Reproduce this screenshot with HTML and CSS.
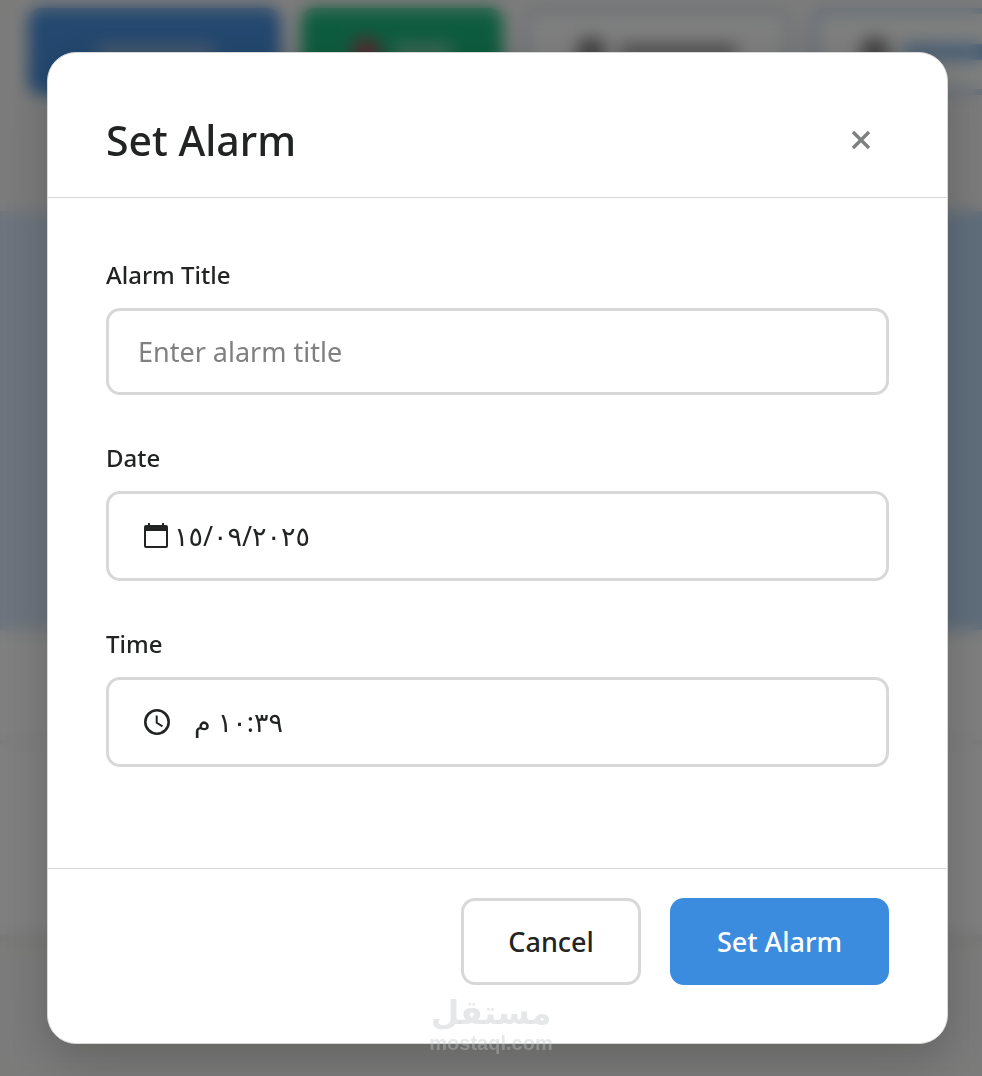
FILE: index.html
```html
<!DOCTYPE html>
<html lang="en">
<head>
    <meta charset="UTF-8">
    <meta name="viewport" content="width=device-width, initial-scale=1.0">
    <title>Set Alarm</title>
    <link rel="stylesheet" href="styles.css">
</head>
<body>
    <!-- page behind the dialog -->
    <div class="page" inert>
        <div class="toolbar">
            <button class="tool tool-blue"><i class="line"></i></button>
            <button class="tool tool-green"><i class="dot"></i><i class="line"></i></button>
            <button class="tool tool-plain"><i class="dot"></i><i class="line"></i></button>
            <button class="tool tool-outline"><i class="dot"></i><i class="line"></i></button>
        </div>
        <div class="content">
            <div class="panel"></div>
            <div class="row"></div>
            <div class="row row-tall"></div>
        </div>
    </div>

    <div class="overlay">
        <form class="modal" role="dialog" aria-labelledby="modal-title">
            <header class="modal-header">
                <h2 id="modal-title">Set Alarm</h2>
                <button type="button" class="close" aria-label="Close">
                    <svg viewBox="0 0 20 20" width="20" height="20"><path d="M2 2 L18 18 M18 2 L2 18"/></svg>
                </button>
            </header>
            <div class="modal-body">
                <div class="group">
                    <label for="title">Alarm Title</label>
                    <div class="field">
                        <input type="text" id="title" placeholder="Enter alarm title">
                    </div>
                </div>
                <div class="group">
                    <label for="date">Date</label>
                    <div class="field field-picker">
                        <svg class="icon" viewBox="0 0 24 26" width="24" height="26">
                            <path d="M4 0h2v2h12V0h2v2h2a2 2 0 0 1 2 2v19a2 2 0 0 1-2 2H2a2 2 0 0 1-2-2V4a2 2 0 0 1 2-2h2z M2 8v15h20V8z" fill-rule="evenodd"/>
                        </svg>
                        <input type="text" id="date" value="١٥/٠٩/٢٠٢٥">
                    </div>
                </div>
                <div class="group">
                    <label for="time">Time</label>
                    <div class="field field-picker field-time">
                        <svg class="icon icon-clock" viewBox="0 0 26 26" width="26" height="26">
                            <circle cx="13" cy="13" r="11.7"/>
                            <path d="M12.7 6.5v7.3l5.8 3.6" stroke-width="2"/>
                        </svg>
                        <input type="text" id="time" dir="rtl" value="١٠:٣٩ م">
                    </div>
                </div>
            </div>
            <footer class="modal-footer">
                <button type="button" class="btn btn-cancel">Cancel</button>
                <button type="submit" class="btn btn-primary">Set Alarm</button>
            </footer>
        </form>
    </div>

    <div class="watermark">
        <span class="watermark-name" lang="ar" dir="rtl">مستقل</span>
        <span class="watermark-site">mostaql.com</span>
    </div>
</body>
</html>
```
FILE: styles.css
```css
* { box-sizing: border-box; }
body, h2 { margin: 0; padding: 0; }
body { position: relative; min-height: 100vh; overflow-x: hidden; font-family: "Noto Sans", "Open Sans", "DejaVu Sans", sans-serif; color: #222424; background: #fbfbfb; }
button, input { font-family: inherit; }

/* page behind */
.page { position: absolute; top: 0; left: 0; width: 100%; height: 100%; overflow: hidden; background: #f8f7f6; }
.toolbar { display: flex; gap: 20px; padding: 8px 0 30px 28px; }
.tool { display: flex; flex: none; align-items: center; justify-content: center; gap: 12px; height: 87px; border: 0; border-radius: 14px; }
.tool-blue { width: 253px; background: #4890de; }
.tool-green { width: 202px; background: #1cb980; }
.tool-plain { width: 268px; border: 6px solid #d8deea; background: #fdfffd; }
.tool-outline { width: 260px; border: 6px solid #bcd4f0; background: #fdfffd; }
.line { width: 120px; height: 16px; border-radius: 8px; background: #8fb4dd; }
.dot { width: 30px; height: 30px; border-radius: 50%; background: #888; }
.tool-green .line { width: 60px; background: #80d0b0; }
.tool-green .dot { background: #a05a60; }
.tool-plain .line { background: #a0a0a0; }
.tool-outline .line { background: #8ab8e6; }
.content { padding-top: 86px; }
.panel { height: 419px; background: linear-gradient(90deg, #dbe8fa, #bfdbf6); }
.row { height: 114px; border-bottom: 4px solid #eeeeee; background: #fdfffd; }
.row-tall { height: 198px; border-bottom: 8px solid #ebebeb; }

/* modal */
.overlay { position: relative; min-height: 100vh; padding: 52px 34px 32px 47px; background: rgba(0,0,0,.5); backdrop-filter: blur(8px); }
.modal { border: 1px solid #d8d8d8; border-radius: 29px; background: #fff; box-shadow: 0 16px 48px rgba(0,0,0,.2); }
.modal-header { display: flex; align-items: center; justify-content: space-between; padding: 58px 76px 28px 58px; border-bottom: 1px solid #d8d8d8; }
.modal-header h2 { font-size: 41px; line-height: 58px; font-weight: 500; }
.close { display: flex; padding: 0; border: 0; background: none; }
.close svg { fill: none; stroke: #7d807f; stroke-width: 3.4; }
.modal-body { padding: 58px 58px 57px; }
.group { margin-bottom: 44px; }
.group label { display: block; margin-bottom: 14px; font-size: 24px; line-height: 38px; font-weight: 500; }
.field { display: flex; align-items: center; height: 87px; padding: 0 29px; border: 3px solid #d8d8d8; border-radius: 14px; background: #fff; }
.field input { flex: 1; min-width: 0; padding: 0; border: 0; outline: 0; font-size: 27px; line-height: 40px; color: #222424; background: none; }
.field input::placeholder { color: #808080; opacity: 1; }
.field-picker { gap: 6px; height: 90px; padding-left: 35px; }
.field-time { gap: 24px; }
.field-picker input { text-align: left; }
.icon { flex: none; fill: #222424; }
.icon-clock { fill: none; stroke: #222424; stroke-width: 2.6; }
.modal-footer { display: flex; justify-content: flex-end; gap: 29px; padding: 29px 58px 58px; border-top: 1px solid #d8d8d8; }
.btn { height: 87px; padding: 0 44px; border: 3px solid #d8d8d8; border-radius: 14px; font-size: 27px; line-height: 40px; font-weight: 500; color: #222424; background: #fff; }
.btn-primary { border-color: #3b8cde; color: #fff; background: #3b8cde; }

.watermark { position: absolute; left: 0; right: 0; bottom: 22px; display: flex; flex-direction: column; align-items: center; color: rgba(190,194,198,.4); pointer-events: none; }
.watermark-name { font-family: "DejaVu Sans", sans-serif; font-size: 33px; line-height: 39px; font-weight: bold; }
.watermark-site { font-family: "Liberation Sans", sans-serif; font-size: 20px; line-height: 22px; font-weight: bold; }
```
